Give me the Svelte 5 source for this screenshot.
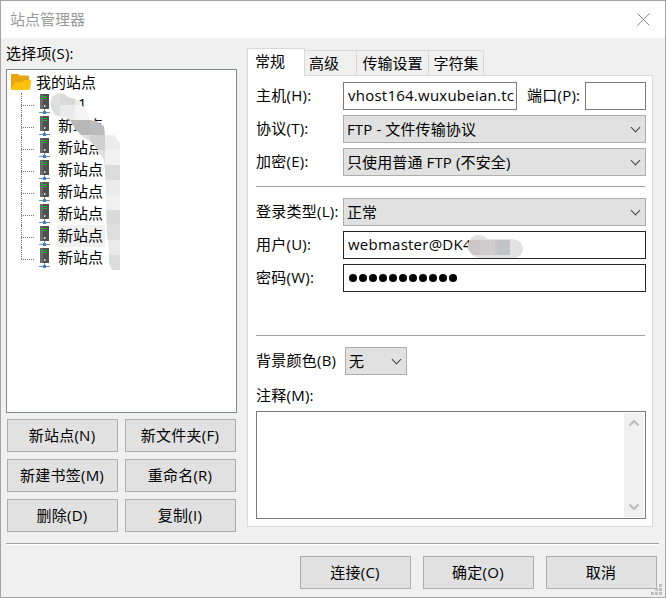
<script>
  let selected = 6
  let activeTab = '常规'

  const sites = ['1', ...Array(7).fill('新站点')]
  const tabs = [
    { name: '常规', size: 'w58' },
    { name: '高级', size: 'w52' },
    { name: '传输设置', size: 'w72' },
    { name: '字符集', size: 'w55' }
  ]
  const actions = ['新站点(N)', '新文件夹(F)', '新建书签(M)', '重命名(R)', '删除(D)', '复制(I)']

  // x, y, width, height, fill
  const treeTiles = [
    [45, 90, 15, 15, '#dfe0df'],
    [60, 90, 15, 15, '#d8dad9'],
    [75, 90, 15, 15, '#ececec'],
    [45, 105, 15, 15, '#dcdedd'],
    [60, 105, 15, 15, '#ebebeb'],
    [75, 105, 15, 15, '#f4f4f4'],
    [60, 120, 30, 15, '#b8b8b8'],
    [90, 120, 15, 15, '#bcbcbc'],
    [75, 135, 15, 15, '#e0e0e0'],
    [90, 135, 15, 15, '#d0d0d0'],
    [105, 135, 15, 15, '#ececec'],
    [90, 150, 15, 15, '#dedede'],
    [105, 150, 15, 15, '#f2f2f2'],
    [104, 165, 16, 15, '#dcdcdc'],
    [104, 180, 16, 15, '#ebebeb'],
    [104, 195, 16, 15, '#f0f0f0'],
    [104, 210, 16, 15, '#dadada'],
    [104, 225, 16, 15, '#dedede'],
    [104, 240, 16, 15, '#e9e9e9'],
    [104, 255, 16, 15, '#dcdcdc']
  ]
</script>

<div class="window">
  <header>
    <span>站点管理器</span>
    <svg class="close" width="13" height="13" viewBox="0 0 13 13">
      <path d="M.5.5l12 12M12.5.5l-12 12" />
    </svg>
  </header>

  <main>
    <section class="left">
      <div class="caption">选择项(S):</div>
      <div class="tree">
        <div class="root">
          <svg width="21" height="18" viewBox="0 0 21 18">
            <path d="M0 2q0-1 1-1h6l2 1.500h8q1 0 1 1V16H0z" fill="#e6a511" />
            <path d="M4 9.500l7-.5 2-2h6.500q1 0 .8 1l-1.300 8q-.3 1-1.500 1H1q-1 0-1-1z" fill="#ffc10e" />
          </svg>
          <span>我的站点</span>
        </div>
        {#each sites as site, i}
          <div class="site" class:last={i === sites.length - 1}>
            <svg class="server" width="12" height="20" viewBox="0 0 12 20">
              <rect x="1" y="0" width="9" height="15" fill="#505050" />
              <path d="M1 0h3v15H1z" fill="#696969" />
              <path d="M3 2.500h5M3 4.500h5" stroke="#22b52b" />
              <path d="M5 11h1.500v2H5z" fill="#ddd" />
              <path d="M5.500 15v3M0 18.500h11" stroke="#888" />
              <path d="M4 17h3v3H4z" fill="#2687e8" />
            </svg>
            <button class="name" class:short={site.length === 1} class:selected={i === selected} on:click={() => (selected = i)}>{site}</button>
          </div>
        {/each}
      </div>
      <div class="actions">
        {#each actions as action}
          <button class="btn">{action}</button>
        {/each}
      </div>
    </section>

    <section class="right">
      <nav>
        {#each tabs as tab}
          <button class="tab {tab.size}" class:active={tab.name === activeTab} on:click={() => (activeTab = tab.name)}>{tab.name}</button>
        {/each}
      </nav>
      <div class="panel">
        <div class="row">
          <span class="label">主机(H):</span>
          <div class="field host">vhost164.wuxubeian.tc</div>
          <span class="label port-label">端口(P):</span>
          <div class="field"></div>
        </div>
        <div class="row">
          <span class="label">协议(T):</span>
          <div class="select">FTP - 文件传输协议<i></i></div>
        </div>
        <div class="row">
          <span class="label">加密(E):</span>
          <div class="select">只使用普通 FTP (不安全)<i></i></div>
        </div>
        <hr class="first" />
        <div class="row">
          <span class="label">登录类型(L):</span>
          <div class="select">正常<i></i></div>
        </div>
        <div class="row">
          <span class="label">用户(U):</span>
          <div class="field dark">webmaster@DK4</div>
        </div>
        <div class="row">
          <span class="label">密码(W):</span>
          <div class="field dark dots">
            {#each Array(11) as _}<b></b>{/each}
          </div>
        </div>
        <hr class="second" />
        <div class="row color">
          <span class="label">背景颜色(B)</span>
          <div class="select small">无<i></i></div>
        </div>
        <div class="notes-label">注释(M):</div>
        <div class="notes">
          <div class="scroll">
            <svg width="10" height="8" viewBox="0 0 10 8"><path d="M.5 6.500L5 2l4.500 4.500" /></svg>
            <svg width="10" height="8" viewBox="0 0 10 8"><path d="M.5 1.500L5 6l4.500-4.500" /></svg>
          </div>
        </div>
      </div>
    </section>
  </main>

  <footer>
    <button class="btn">连接(C)</button>
    <button class="btn">确定(O)</button>
    <button class="btn">取消</button>
  </footer>

  <svg class="overlay" width="666" height="598" viewBox="0 0 666 598">
    <clipPath id="tree-smear">
      <path d="M50 105L52 97L58 93L64 94L70 98L77 99L80 104L85 108L90 118V120L96 121L104 126L105 135H114L120 143V270H112L109 264V250L107 235L106 205L105 170L104 160L98 150L90 141L84 138L76 130L70 120L62 117L55 115z" />
    </clipPath>
    <g clip-path="url(#tree-smear)" shape-rendering="crispEdges">
      {#each treeTiles as [x, y, w, h, fill]}
        <rect {x} {y} width={w} height={h} {fill} />
      {/each}
    </g>
    <path d="M468 247q1-12 11-12q5 0 8 4h25q11 1 11 10q-1 9-11 9h-29q-14 0-15-11z" fill="#e2e2e2" />
    <path d="M469 240h41v15h-36q-5-3-5-8z" fill="#c9c7c8" />
    <path d="M480 240h15v15h-15z" fill="#d0cccd" />
    <path d="M498 240h12v15h-12z" fill="#c1c3c5" />
    <path d="M659 584h3v3h-3zM655 588h3v3h-3zM659 588h3v3h-3zM651 592h3v3h-3zM655 592h3v3h-3zM659 592h3v3h-3z" fill="#bfbfbf" />
  </svg>
</div>

<style>
  .window {
    position: relative;
    box-sizing: border-box;
    width: 666px;
    height: 598px;
    border: 1px solid #a5a5a5;
    background: #f0f0f0;
    color: #000;
    font: 15px/20px "Open Sans", "Noto Sans CJK SC", sans-serif;
    white-space: nowrap;
    overflow: hidden;
  }

  .window :global(*) {
    box-sizing: border-box;
  }

  header {
    display: flex;
    justify-content: space-between;
    align-items: center;
    height: 37px;
    padding: 0 15px 0 9px;
    background: #fff;
    color: #999;
  }

  header span {
    padding-bottom: 2px;
  }

  .close path {
    fill: none;
    stroke: #888;
  }

  main {
    display: flex;
    gap: 10px;
    height: 505px;
    padding-left: 5px;
  }

  .left {
    width: 231px;
  }

  .caption {
    height: 31px;
    padding-top: 5px;
    letter-spacing: 0.25px;
  }

  .tree {
    height: 344px;
    padding: 1px 0;
    border: 1px solid #828790;
    background: #fff;
  }

  .root {
    display: flex;
    align-items: center;
    gap: 4px;
    height: 22px;
    padding-left: 4px;
  }

  .site {
    position: relative;
    display: flex;
    height: 22px;
    padding-left: 32px;
  }

  .site::before {
    content: '';
    position: absolute;
    left: 14px;
    top: 0;
    height: 22px;
    border-left: 1px dotted #777;
  }

  .site.last::before {
    height: 12px;
  }

  .site::after {
    content: '';
    position: absolute;
    left: 14px;
    top: 12px;
    width: 13px;
    border-top: 1px dotted #777;
  }

  .server {
    margin: 1px 6px 0 0;
  }

  button {
    padding: 0;
    border: 0;
    background: none;
    color: inherit;
    font: inherit;
  }

  .name {
    height: 22px;
    padding: 0 2px 1px 1px;
    line-height: 21px;
  }

  .short {
    margin-left: 20px;
  }

  .selected {
    background: #f0f0f0;
  }

  .actions {
    display: grid;
    grid-template-columns: 111px 111px;
    gap: 7px;
    padding: 6px 1px;
  }

  .btn {
    width: 111px;
    height: 33px;
    padding: 0 1px 2px 0;
    border: 1px solid #adadad;
    background: #e1e1e1;
    letter-spacing: 0.25px;
  }

  .right {
    width: 406px;
    padding-top: 10px;
  }

  nav {
    display: flex;
    align-items: flex-end;
    height: 28px;
  }

  .tab {
    height: 26px;
    border: 1px solid #d9d9d9;
    border-left: 0;
    background: #f0f0f0;
  }

  .tab.active {
    position: relative;
    height: 28px;
    padding-bottom: 3px;
    border-left: 1px solid #d9d9d9;
    border-bottom: 0;
    background: #fff;
  }

  .w58 { width: 58px; padding-right: 12px; }
  .w52 { width: 52px; padding-right: 13px; }
  .w72 { width: 72px; }
  .w55 { width: 55px; }

  .panel {
    height: 452px;
    margin-top: -1px;
    padding: 6px 6px 0 8px;
    border: 1px solid #d9d9d9;
    background: #fff;
  }

  .row {
    display: flex;
    align-items: center;
    height: 28px;
    margin-bottom: 5px;
  }

  .label {
    width: 87px;
    padding-bottom: 2px;
    letter-spacing: 0.25px;
  }

  .field {
    flex: 1;
    height: 28px;
    padding: 2px 4px;
    border: 1px solid #7a7a7a;
    background: #fff;
    letter-spacing: 0.24px;
    overflow: hidden;
  }

  .host {
    flex: none;
    width: 174px;
    padding-right: 0;
  }

  .port-label {
    width: 68px;
    padding-left: 10px;
  }

  .dark {
    border-color: #262626;
  }

  .dots {
    display: flex;
    align-items: center;
    gap: 2px;
    padding: 2px 5px;
  }

  .dots b {
    width: 8px;
    height: 8px;
    border-radius: 50%;
    background: #000;
  }

  .select {
    display: flex;
    flex: 1;
    align-items: center;
    justify-content: space-between;
    height: 28px;
    padding: 0 6px 0 3px;
    border: 1px solid #adadad;
    background: #e1e1e1;
    letter-spacing: 0.12px;
  }

  .select i {
    width: 7px;
    height: 7px;
    margin-top: -4px;
    border: solid #444;
    border-width: 0 1px 1px 0;
    transform: rotate(45deg);
  }

  .small {
    flex: none;
    width: 62px;
  }

  hr {
    height: 1px;
    border: 0;
    background: #a0a0a0;
  }

  .first {
    margin: 10px 1px 11px 0;
  }

  .second {
    margin: 43px 1px 11px 0;
  }

  .color .label {
    width: 89px;
  }

  .notes-label {
    height: 31px;
    padding-top: 5px;
    letter-spacing: 0.25px;
  }

  .notes {
    display: flex;
    justify-content: flex-end;
    height: 108px;
    padding: 1px;
    border: 1px solid #7a7a7a;
  }

  .scroll {
    display: flex;
    flex-direction: column;
    align-items: center;
    justify-content: space-between;
    width: 20px;
    padding: 6px 0;
    background: #f0f0f0;
  }

  .scroll path {
    fill: none;
    stroke: #bbb;
    stroke-width: 2;
  }

  footer {
    display: flex;
    gap: 12px;
    justify-content: flex-end;
    margin: 0 6px 0 5px;
    padding: 12px 2px 0 0;
    border-top: 1px solid #a0a0a0;
    box-shadow: inset 0 1px #fff;
  }

  .overlay {
    position: absolute;
    left: -1px;
    top: -1px;
    pointer-events: none;
  }
</style>
